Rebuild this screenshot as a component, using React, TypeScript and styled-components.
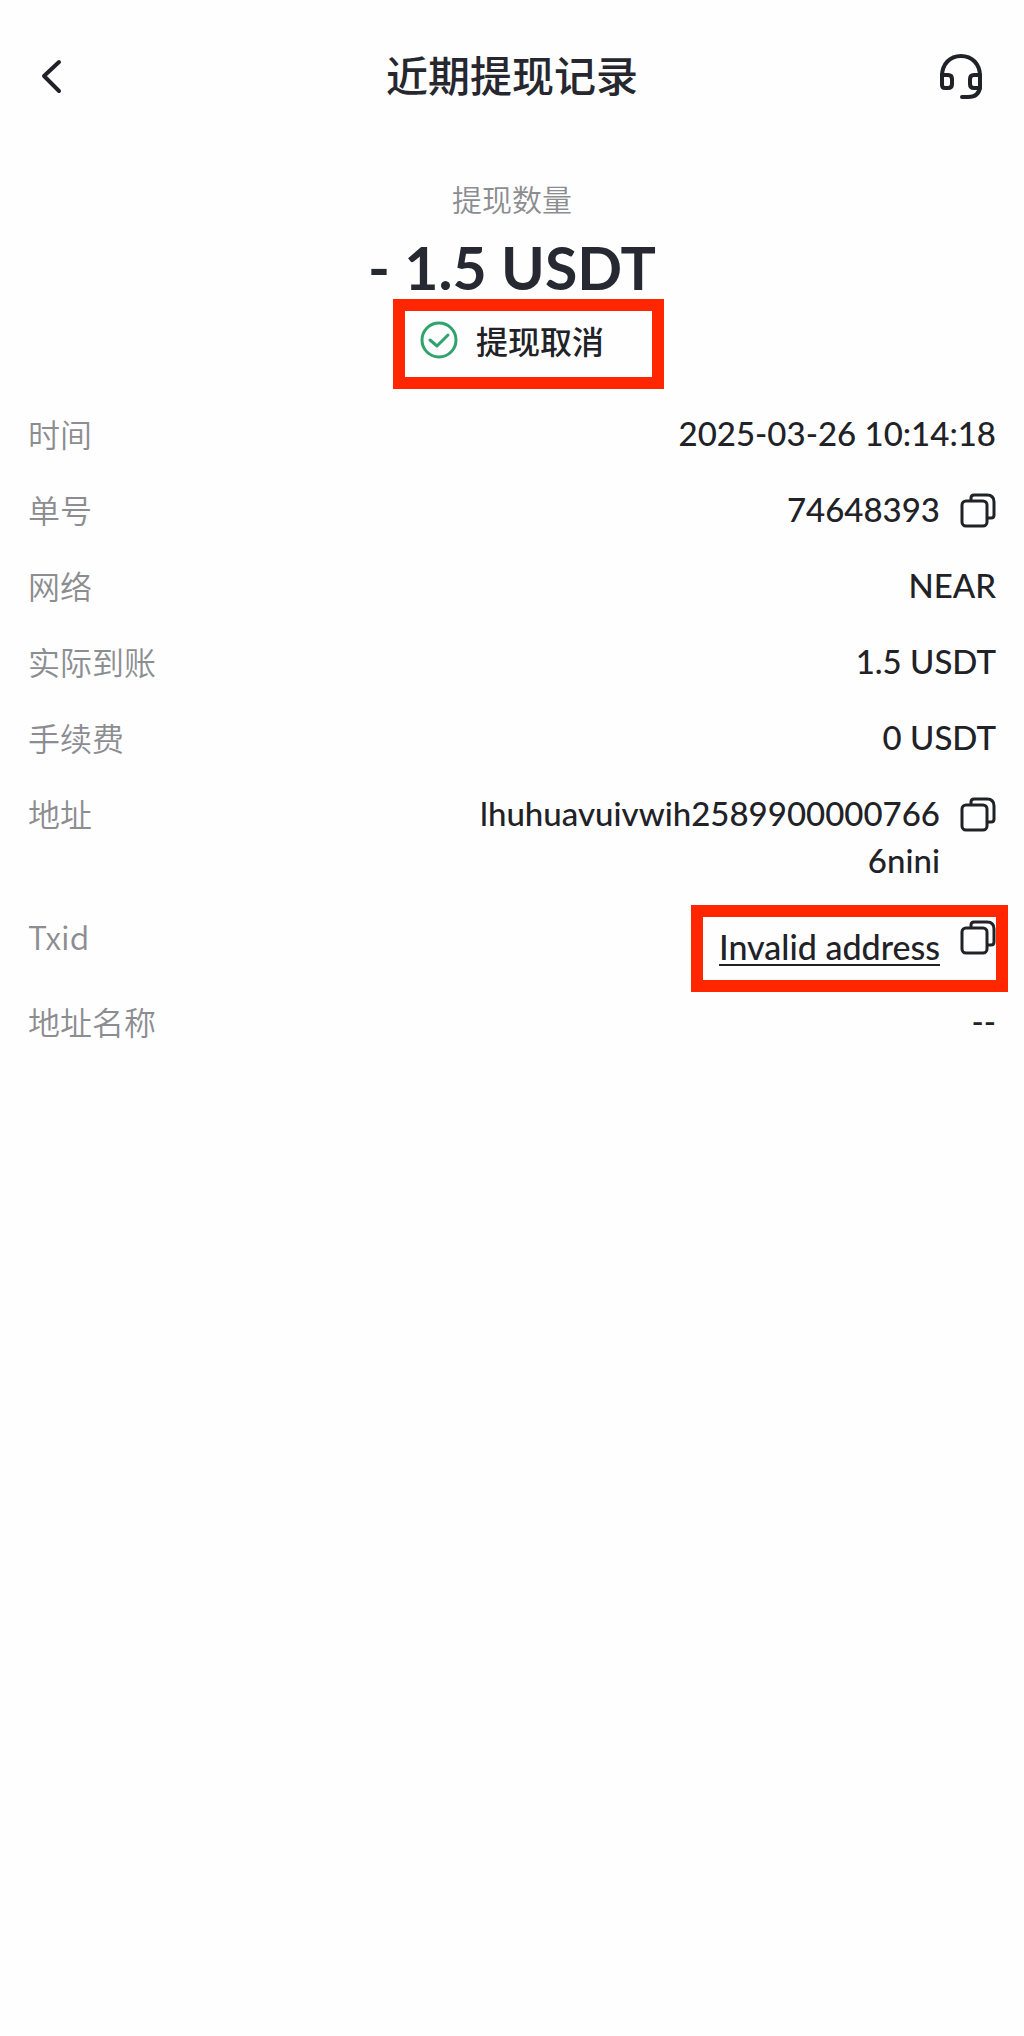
import React from "react";
import styled, { createGlobalStyle, css } from "styled-components";

const ink = "#212227";
const muted = "#8c8d91";
const latin = `Lato, "Noto Sans CJK SC", sans-serif`;
const han = `"Noto Sans CJK SC", "Noto Sans", sans-serif`;

const GlobalStyle = createGlobalStyle`
  * { box-sizing: border-box; }
  body {
    margin: 0;
    background: #fefefe;
    color: ${ink};
    font-family: ${han};
  }
`;

const Page = styled.div`
  min-height: 100vh;
  padding: 0 28px;
`;

const Header = styled.header`
  display: grid;
  grid-template-columns: 58px 1fr 58px;
  align-items: center;
  height: 152px;
`;

const Title = styled.h1`
  margin: 0;
  padding-bottom: 4px;
  font-size: 42px;
  line-height: 60px;
  font-weight: 500;
  text-align: center;
  color: #26272f;
`;

const IconButton = styled.button`
  display: flex;
  flex: none;
  align-items: center;
  justify-content: center;
  padding: 0;
  border: 0;
  background: none;
  color: ${ink};
  cursor: pointer;
`;

const HeaderButton = styled(IconButton)`
  width: 48px;
  height: 48px;
`;

const Summary = styled.section`
  display: flex;
  flex-direction: column;
  align-items: center;
  padding: 22px 0 46px;
`;

const SummaryLabel = styled.p`
  margin: 0;
  font-size: 30px;
  line-height: 48px;
  font-weight: 350;
  color: ${muted};
`;

const Amount = styled.p`
  margin: 6px 0 0;
  font-family: ${latin};
  font-size: 59px;
  line-height: 80px;
  font-weight: 700;
  color: #262832;
`;

const highlight = css`
  content: "";
  position: absolute;
  border: 12px solid #ff2600;
  pointer-events: none;
`;

const Status = styled.div`
  position: relative;
  display: flex;
  align-items: center;
  gap: 18px;
  margin-top: 8px;
  font-size: 32px;
  line-height: 48px;
  font-weight: 500;

  &::after {
    ${highlight}
    inset: -17px -60px -25px -27px;
  }
`;

const Details = styled.dl`
  display: flex;
  flex-direction: column;
  gap: 28px;
  margin: 0;
`;

const Row = styled.div`
  display: flex;
  align-items: flex-start;
  justify-content: space-between;
  gap: 24px;
`;

const Term = styled.dt`
  flex: none;
  font-size: 32px;
  line-height: 46px;
  font-weight: 350;
  color: ${muted};
`;

const Value = styled.dd<{ $marked?: boolean }>`
  position: relative;
  display: flex;
  align-items: flex-start;
  gap: 20px;
  margin: 0;
  font-family: ${latin};
  font-size: 33px;
  line-height: 47px;
  font-weight: 500;
  text-align: right;

  ${(p) =>
    p.$marked &&
    css`
      font-size: 34px;

      &::after {
        ${highlight}
        inset: -8px -12px -22px -28px;
      }
    `}
`;

const ValueText = styled.span`
  max-width: 468px;
  padding-bottom: 1px;
  overflow-wrap: anywhere;
`;

const TxLink = styled.a`
  margin-top: 10px;
  color: inherit;
  text-decoration: underline;
  text-decoration-thickness: 2px;
  text-underline-offset: 4px;
`;

const CopyButton = styled(IconButton)`
  width: 36px;
  height: 48px;
`;

function BackIcon() {
  return (
    <svg width="48" height="48" viewBox="0 0 48 48" fill="none" stroke="currentColor" strokeWidth="4" strokeLinecap="round" strokeLinejoin="round" aria-hidden="true">
      <path d="M31 10 16 24l15 15" />
    </svg>
  );
}

function HeadsetIcon() {
  return (
    <svg width="48" height="48" viewBox="0 0 48 48" fill="none" stroke="currentColor" strokeWidth="4" strokeLinecap="round" aria-hidden="true">
      <path d="M4 24C4 12 12 4 23 4s19 8 19 20v11q-1 10-12 10h-6" />
      <path d="M4 23h6q4 0 4 4v5q0 4-4 4H7q-3 0-3-3z" />
      <path d="M42 23h-6q-4 0-4 4v5q0 4 4 4h6" />
    </svg>
  );
}

function CheckIcon() {
  return (
    <svg width="38" height="38" viewBox="0 0 38 38" fill="none" stroke="#2fa36b" strokeWidth="3" strokeLinecap="round" strokeLinejoin="round" aria-hidden="true">
      <circle cx="19" cy="19" r="17" />
      <path d="m10 19 7 6 11-11" />
    </svg>
  );
}

function CopyIcon() {
  return (
    <svg width="36" height="36" viewBox="0 0 36 36" fill="none" stroke="currentColor" strokeWidth="3" strokeLinejoin="round" aria-hidden="true">
      <rect x="2" y="9" width="25" height="25" rx="4" />
      <path d="M11 8V6q0-3 3-3h13q7 0 7 7v13q0 3-3 3h-3" />
    </svg>
  );
}

type Detail = { label: string; value: string; copy?: boolean; link?: boolean };

const details: Detail[] = [
  { label: "时间", value: "2025-03-26 10:14:18" },
  { label: "单号", value: "74648393", copy: true },
  { label: "网络", value: "NEAR" },
  { label: "实际到账", value: "1.5 USDT" },
  { label: "手续费", value: "0 USDT" },
  { label: "地址", value: "lhuhuavuivwih25899000007666nini", copy: true },
  { label: "Txid", value: "Invalid address", copy: true, link: true },
  { label: "地址名称", value: "--" },
];

export default function App() {
  return (
    <Page>
      <GlobalStyle />
      <Header>
        <HeaderButton type="button" aria-label="返回">
          <BackIcon />
        </HeaderButton>
        <Title>近期提现记录</Title>
        <HeaderButton type="button" aria-label="客服">
          <HeadsetIcon />
        </HeaderButton>
      </Header>
      <main>
        <Summary>
          <SummaryLabel>提现数量</SummaryLabel>
          <Amount>- 1.5 USDT</Amount>
          <Status>
            <CheckIcon />
            <span>提现取消</span>
          </Status>
        </Summary>
        <Details>
          {details.map((d) => (
            <Row key={d.label}>
              <Term>{d.label}</Term>
              <Value $marked={d.link}>
                {d.link ? <TxLink href="#txid">{d.value}</TxLink> : <ValueText>{d.value}</ValueText>}
                {d.copy && (
                  <CopyButton type="button" aria-label={`复制${d.label}`}>
                    <CopyIcon />
                  </CopyButton>
                )}
              </Value>
            </Row>
          ))}
        </Details>
      </main>
    </Page>
  );
}
